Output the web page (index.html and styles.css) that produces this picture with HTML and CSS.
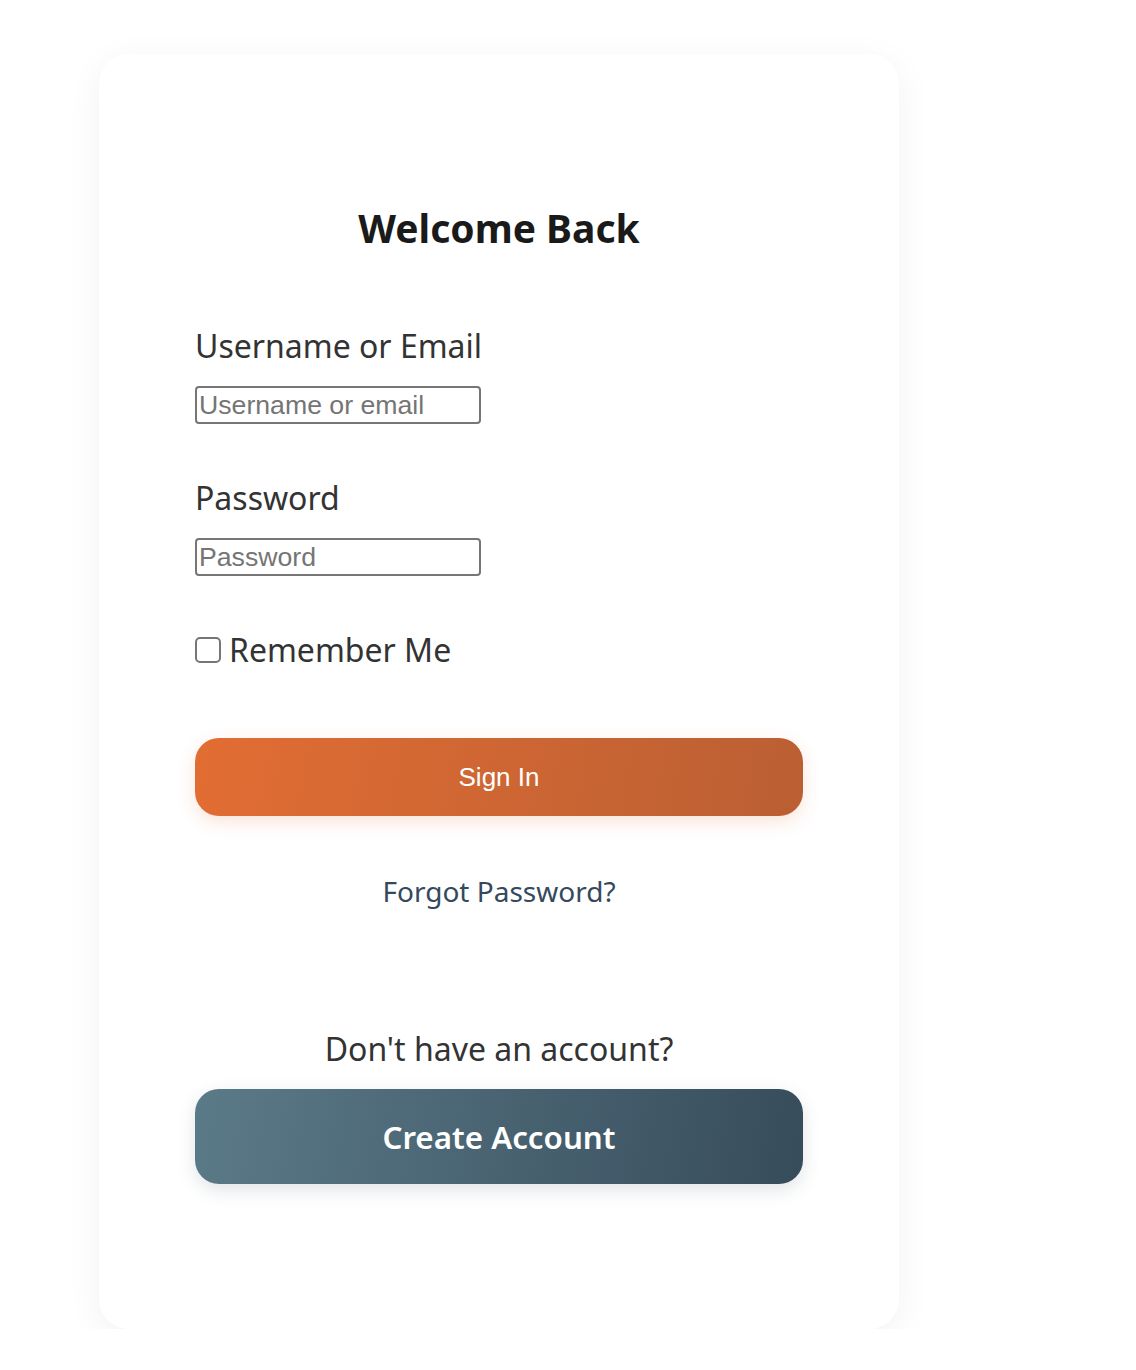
FILE: index.html
```html
<!DOCTYPE html>
<html lang="en">
<head>
<meta charset="utf-8">
<title>Welcome Back</title>
<link rel="stylesheet" href="styles.css">
</head>
<body>
<div class="card">
  <h1 class="title">Welcome Back</h1>
  <form class="form">
    <label class="label" for="user">Username or Email</label>
    <input class="field" id="user" type="text" placeholder="Username or email">
    <label class="label label-gap" for="pass">Password</label>
    <input class="field" id="pass" type="password" placeholder="Password">
    <div class="remember">
      <input class="check" id="rem" type="checkbox">
      <label class="remember-text" for="rem">Remember Me</label>
    </div>
    <button class="btn-signin" type="button">Sign In</button>
    <a class="forgot" href="#">Forgot Password?</a>
    <p class="noacc">Don't have an account?</p>
    <button class="btn-create" type="button">Create Account</button>
  </form>
</div>
</body>
</html>
```
FILE: styles.css
```css
html, body {
  margin: 0;
  padding: 0;
  background: #ffffff;
}
body {
  font-family: "Noto Sans", "Open Sans", sans-serif;
}
.card {
  box-sizing: border-box;
  width: 800px;
  margin: 54px 0 0 99px;
  padding: 96px 96px 145px;
  background: #ffffff;
  border-radius: 30px;
  box-shadow: 0 8px 36px rgba(0, 0, 0, 0.055);
}
.title {
  margin: 51px 0 0;
  font-size: 39px;
  line-height: 54px;
  font-weight: 700;
  color: #1a1a1a;
  text-align: center;
}
.form {
  display: flex;
  flex-direction: column;
  align-items: flex-start;
  margin-top: 69px;
}
.label {
  font-size: 32px;
  line-height: 44px;
  color: #333333;
}
.label-gap {
  margin-top: 52px;
}
.field {
  box-sizing: border-box;
  width: 286px;
  height: 38px;
  margin: 18px 0 0;
  padding: 0 2px;
  border: 2px solid #767676;
  border-radius: 4px;
  font-family: "Liberation Sans", Arial, sans-serif;
  font-size: 26.67px;
  color: #222;
  background: #fff;
}
.field::placeholder {
  color: #757575;
}
.remember {
  display: flex;
  align-items: center;
  margin-top: 52px;
  height: 44px;
}
.check {
  appearance: none;
  -webkit-appearance: none;
  box-sizing: border-box;
  width: 26px;
  height: 26px;
  margin: 0 8px 0 0;
  border: 2px solid #767676;
  border-radius: 5px;
  background: #fff;
}
.remember-text {
  font-size: 32px;
  line-height: 44px;
  color: #333333;
}
.btn-signin {
  align-self: stretch;
  height: 78px;
  margin-top: 66px;
  border: 0;
  border-radius: 24px;
  background: linear-gradient(100deg, #e26d33 0%, #ba5f33 100%);
  box-shadow: 0 6px 18px rgba(224, 108, 51, 0.18);
  color: #ffffff;
  font-family: "Liberation Sans", Arial, sans-serif;
  font-size: 26px;
}
.forgot {
  align-self: center;
  margin-top: 56px;
  font-size: 28px;
  line-height: 38px;
  color: #34495e;
  text-decoration: none;
}
.noacc {
  align-self: center;
  margin: 117px 0 0;
  font-size: 32px;
  line-height: 44px;
  color: #333333;
}
.btn-create {
  align-self: stretch;
  height: 95px;
  margin-top: 18px;
  border: 0;
  border-radius: 24px;
  background: linear-gradient(100deg, #5b7a88 0%, #374c5b 100%);
  box-shadow: 0 6px 18px rgba(52, 73, 94, 0.15);
  color: #ffffff;
  font-family: "Noto Sans", "Open Sans", sans-serif;
  font-size: 31.3px;
  font-weight: 600;
}
```
